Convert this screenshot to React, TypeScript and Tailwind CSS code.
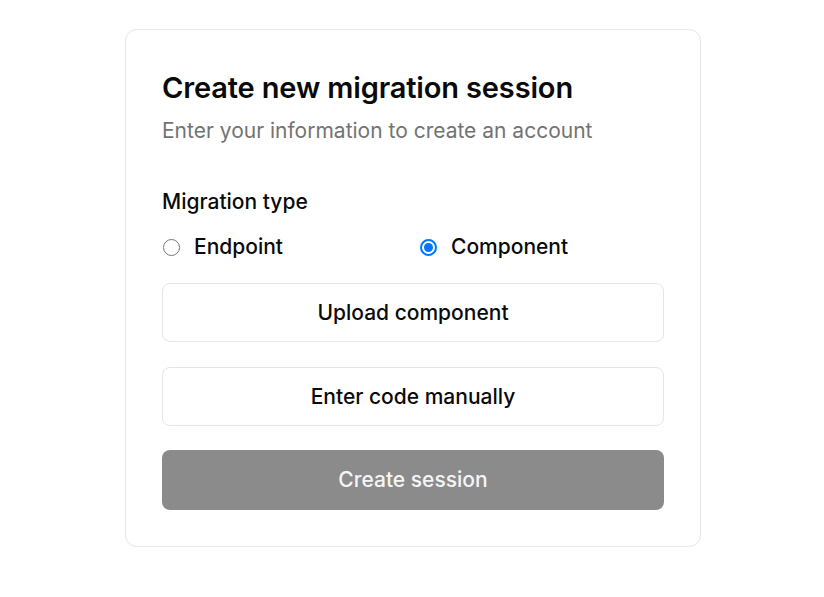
import React from "react";

export default function App() {
  return (
    <div className="min-h-[597px] w-full bg-white flex justify-center" style={{ fontFamily: "Inter, 'Noto Sans', sans-serif" }}>
      <div className="mt-[29px] w-[576px] h-[518px] rounded-[12px] border border-[#e5e5e5] bg-white px-[36px] pt-[40px] ml-[2px]">
        <h1 className="text-[29px] leading-[36px] font-semibold text-[#0a0a0a] tracking-[-0.005em]">Create new migration session</h1>
        <p className="mt-[11px] text-[21px] leading-[28px] text-[#737373]">Enter your information to create an account</p>
        <div className="mt-[43px] text-[21px] leading-[28px] font-medium text-[#0a0a0a]">Migration type</div>
        <div className="mt-[17px] flex items-center h-[28px]">
          <label className="w-[258px] flex items-center gap-[14px]">
            <span className="w-[17px] h-[17px] rounded-full border border-[#767676] bg-white ml-[1px]" />
            <span className="text-[21px] font-medium text-[#0a0a0a]">Endpoint</span>
          </label>
          <label className="flex items-center gap-[14px]">
            <span className="w-[17px] h-[17px] rounded-full border-2 border-[#0075ff] bg-white flex items-center justify-center">
              <span className="w-[9px] h-[9px] rounded-full bg-[#0075ff]" />
            </span>
            <span className="text-[21px] font-medium text-[#0a0a0a]">Component</span>
          </label>
        </div>
        <div className="mt-[22px] flex flex-col">
          <button className="h-[59px] w-full rounded-[8px] border border-[#e5e5e5] bg-white text-[21px] font-medium text-[#0a0a0a]">Upload component</button>
          <button className="mt-[25px] h-[59px] w-full rounded-[8px] border border-[#e5e5e5] bg-white text-[21px] font-medium text-[#0a0a0a]">Enter code manually</button>
          <button className="mt-[24px] h-[60px] w-full rounded-[8px] bg-[#8b8b8c] text-[21px] font-medium text-[#f5f5f5]">Create session</button>
        </div>
      </div>
    </div>
  );
}
